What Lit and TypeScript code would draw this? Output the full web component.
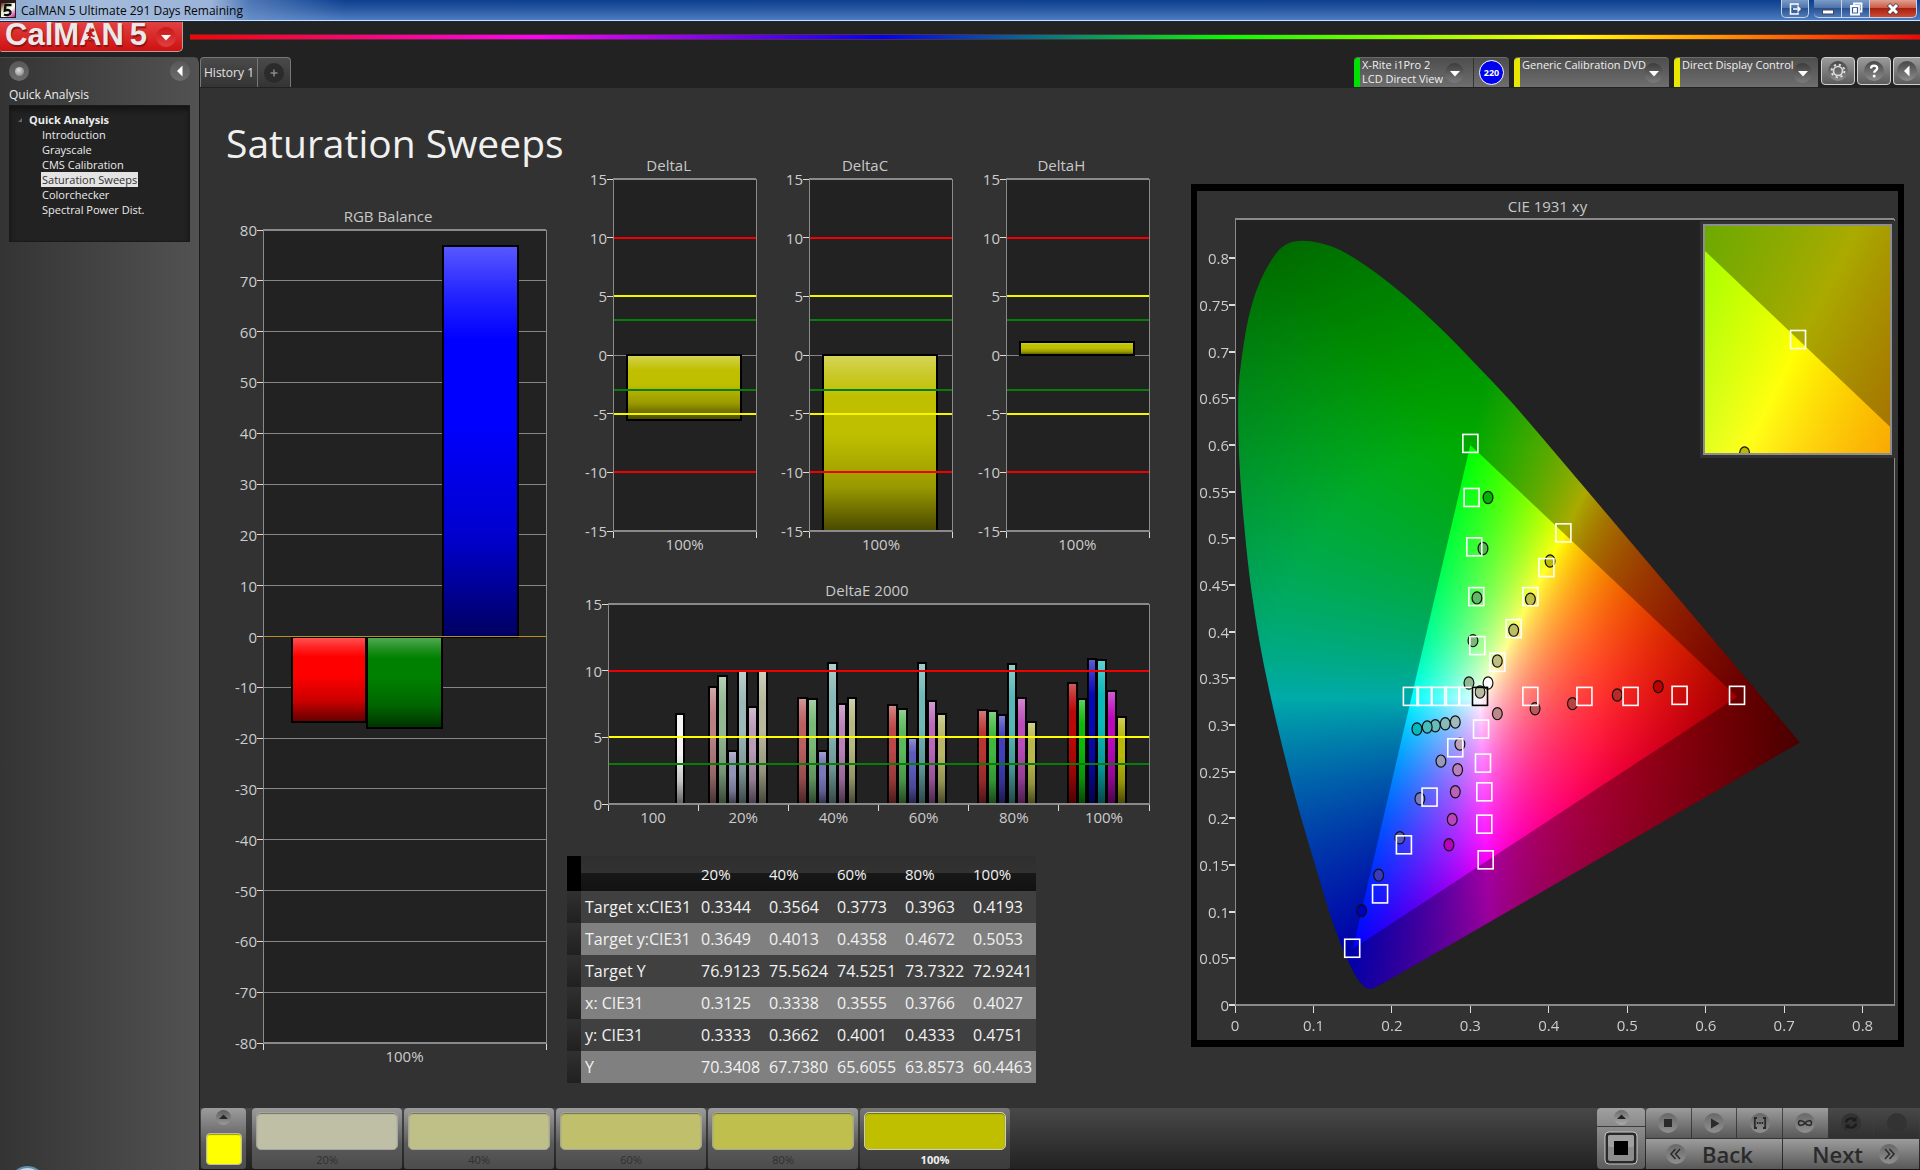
import { LitElement, html, svg, css, nothing } from "lit";
import { customElement, property } from "lit/decorators.js";
import { styleMap } from "lit/directives/style-map.js";

/* ------------------------------------------------------------------ data */

interface Bar { x: number; w: number; value: number; color: string; }
interface RefLine { at: number; color: string; }
interface ChartSpec {
  title: string;
  min: number;
  max: number;
  step: number;
  labels: string[];
  bars: Bar[];
  refs: RefLine[];
}

const RED = "#f00000";
const YELLOW = "#f5f500";
const GREEN = "#087d08";

const rgbBalance: ChartSpec = {
  title: "RGB Balance",
  min: -80, max: 80, step: 10,
  labels: ["100%"],
  bars: [
    { x: 10.1, w: 26.4, value: -16.8, color: "#ff0000" },
    { x: 36.9, w: 26.4, value: -18, color: "#008000" },
    { x: 63.6, w: 26.6, value: 76.9, color: "#0000ff" },
  ],
  refs: [{ at: 0, color: "#b8901c" }],
};

const deltaRefs: RefLine[] = [
  { at: 10, color: RED }, { at: 5, color: YELLOW }, { at: 3, color: GREEN },
  { at: -3, color: GREEN }, { at: -5, color: YELLOW }, { at: -10, color: RED },
];

const delta = (title: string, value: number): ChartSpec => ({
  title, min: -15, max: 15, step: 5, labels: ["100%"],
  bars: [{ x: 10, w: 79.5, value, color: "#bfbf00" }],
  refs: deltaRefs,
});

const sweepColors = [
  ["#b98080", "#92b892", "#9494b8", "#9cb8b8", "#b89cb8", "#b8b89c"],
  ["#bb6060", "#78b878", "#7878bb", "#88b8b8", "#bb80bb", "#b8b882"],
  ["#bb4848", "#5cb85c", "#5c5cbb", "#70b8b8", "#bb68bb", "#b8b868"],
  ["#bb3434", "#40b840", "#4040bb", "#54b8b8", "#bb4cbb", "#b8b84c"],
  ["#bb0808", "#0cb80c", "#0808bb", "#0cb8b8", "#bb08bb", "#b8b80c"],
];
const sweepValues = [
  [8.8, 9.6, 4, 9.95, 7.3, 9.95],
  [7.93, 7.85, 4, 10.6, 7.52, 7.93],
  [7.4, 7.15, 4.97, 10.6, 7.7, 6.77],
  [7.02, 6.95, 6.65, 10.48, 7.93, 6.12],
  [9.1, 7.85, 10.86, 10.78, 8.45, 6.55],
];

const deltaE: ChartSpec = {
  title: "DeltaE 2000",
  min: 0, max: 15, step: 5,
  labels: ["100", "20%", "40%", "60%", "80%", "100%"],
  bars: [
    { x: 12.5, w: 1.6, value: 6.77, color: "#f4f4f4" },
    ...sweepValues.flatMap((row, g) =>
      row.map((value, i) => ({
        x: 18.6 + g * 16.6 + i * 1.82, w: 1.6, value, color: sweepColors[g][i],
      }))),
  ],
  refs: [{ at: 10, color: RED }, { at: 5, color: "#ffff00" }, { at: 3, color: GREEN }],
};

const tableHead = ["20%", "40%", "60%", "80%", "100%"];
const tableRows: [string, string[]][] = [
  ["Target x:CIE31", ["0.3344", "0.3564", "0.3773", "0.3963", "0.4193"]],
  ["Target y:CIE31", ["0.3649", "0.4013", "0.4358", "0.4672", "0.5053"]],
  ["Target Y", ["76.9123", "75.5624", "74.5251", "73.7322", "72.9241"]],
  ["x: CIE31", ["0.3125", "0.3338", "0.3555", "0.3766", "0.4027"]],
  ["y: CIE31", ["0.3333", "0.3662", "0.4001", "0.4333", "0.4751"]],
  ["Y", ["70.3408", "67.7380", "65.6055", "63.8573", "60.4463"]],
];

type Point = [number, number];

const locus: Point[] = [
  [0.1711, 0.0168], [0.1627, 0.0204], [0.1548, 0.0293], [0.1428, 0.049], [0.1247, 0.0865],
  [0.1054, 0.1401], [0.0765, 0.2223], [0.0584, 0.2831], [0.0434, 0.3367], [0.0306, 0.39],
  [0.0181, 0.4583], [0.009, 0.537], [0.0046, 0.5905], [0.0036, 0.6477], [0.006, 0.6799],
  [0.0163, 0.7371], [0.0313, 0.7764], [0.0524, 0.8068], [0.067, 0.8165], [0.0843, 0.8193],
  [0.108, 0.8168], [0.1337, 0.8097], [0.1669, 0.7925], [0.2, 0.7715], [0.23, 0.75],
  [0.2663, 0.722], [0.3024, 0.6906], [0.3506, 0.6477], [0.3747, 0.6245], [0.447, 0.553],
  [0.6217, 0.3796], [0.72, 0.2813], [0.1807, 0.0186],
];
const gamut: Point[] = [[0.64, 0.33], [0.3, 0.6], [0.15, 0.06]];

const targets: Point[] = [
  [0.3, 0.6016], [0.3016, 0.5437], [0.305, 0.4908], [0.3076, 0.4375], [0.3089, 0.385],
  [0.4186, 0.5058], [0.3969, 0.4686], [0.3765, 0.4375], [0.3552, 0.4032], [0.3344, 0.3671],
  [0.2242, 0.3306], [0.2416, 0.3306], [0.2599, 0.3306], [0.2769, 0.3306], [0.2948, 0.3306],
  [0.3765, 0.3306], [0.4454, 0.3306], [0.5042, 0.3306], [0.5667, 0.3317], [0.6399, 0.3317],
  [0.3136, 0.2956], [0.3161, 0.2591], [0.3178, 0.2284], [0.3178, 0.1937], [0.3195, 0.1555],
  [0.2808, 0.2756], [0.248, 0.2227], [0.2153, 0.1716], [0.1849, 0.119], [0.1494, 0.0608],
];
const whitePoint: Point = [0.3123, 0.3306];

const readings: [number, number, string][] = [
  [0.3225, 0.5437, "#00b400"], [0.3161, 0.489, "#4cb84c"], [0.3084, 0.4361, "#62b862"],
  [0.3033, 0.3903, "#7ab87a"], [0.2982, 0.345, "#92b892"], [0.3225, 0.345, "#ffffff"],
  [0.3123, 0.3353, "#bbbba0"], [0.3344, 0.3685, "#bebe80"], [0.3552, 0.4014, "#bdbd64"],
  [0.3765, 0.4347, "#bdbd48"], [0.4016, 0.4756, "#baba00"], [0.3344, 0.3121, "#c08888"],
  [0.3825, 0.3174, "#bb5858"], [0.4301, 0.3228, "#bb4040"], [0.4872, 0.3321, "#bb2828"],
  [0.5395, 0.341, "#bb0000"], [0.2808, 0.3031, "#a0bbbb"], [0.268, 0.3013, "#88bbbb"],
  [0.2553, 0.2992, "#66bbbb"], [0.245, 0.2978, "#48bbbb"], [0.2319, 0.2956, "#00bbbb"],
  [0.2867, 0.2795, "#bb9fbb"], [0.2838, 0.252, "#bb7fbb"], [0.2808, 0.2284, "#bb60bb"],
  [0.2769, 0.1988, "#bb44bb"], [0.2727, 0.1716, "#bb00bb"], [0.2625, 0.2613, "#9898bb"],
  [0.2357, 0.2209, "#7a7abb"], [0.2101, 0.1791, "#5858bb"], [0.1831, 0.1391, "#3a3abb"],
  [0.1614, 0.1009, "#0000bb"],
];

/* ------------------------------------------------------------- bar chart */

@customElement("bar-chart")
export class BarChart extends LitElement {
  @property({ attribute: false }) spec!: ChartSpec;

  static styles = css`
    :host { display: flex; flex-direction: column; padding-left: var(--axis, 32px); }
    .title {
      margin: 0 0 0 calc(var(--axis, 32px) * -1);
      font-size: 15px; font-weight: 400; line-height: 25px; padding-bottom: 1px; text-align: center; color: #c8c8c8;
    }
    .plot { flex: 1; min-height: var(--plot, 300px); position: relative; }
    svg { position: absolute; inset: 0; width: 100%; height: 100%; overflow: visible; shape-rendering: crispEdges; }
    text { font-size: 15px; fill: #cccccc; text-anchor: end; }
    .labels { display: flex; height: 28px; line-height: 27px; font-size: 15px; color: #cccccc; }
    .labels span { flex: 1; text-align: center; }
  `;

  private y(v: number): number {
    const { min, max } = this.spec;
    return ((max - Math.max(min, Math.min(max, v))) / (max - min)) * 100;
  }

  render() {
    const s = this.spec;
    const ticks: number[] = [];
    for (let v = s.min; v <= s.max; v += s.step) ticks.push(v);
    return html`
      <h2 class="title">${s.title}</h2>
      <div class="plot">
        <svg role="img" aria-label=${s.title}>
          <defs>
            <linearGradient id="gloss" x1="0" y1="0" x2="0" y2="1">
              <stop offset="0" stop-color="#fff" stop-opacity=".35"></stop>
              <stop offset=".12" stop-color="#fff" stop-opacity=".15"></stop>
              <stop offset=".24" stop-color="#fff" stop-opacity="0"></stop>
              <stop offset=".45" stop-color="#000" stop-opacity="0"></stop>
              <stop offset=".75" stop-color="#000" stop-opacity=".2"></stop>
              <stop offset="1" stop-color="#000" stop-opacity=".62"></stop>
            </linearGradient>
          </defs>
          <rect width="100%" height="100%" fill="#222222"></rect>
          ${ticks.map((v) => svg`
            <line x1="0" x2="100%" y1="${this.y(v)}%" y2="${this.y(v)}%" stroke="#868686"></line>
            <line x1="-6" x2="0" y1="${this.y(v)}%" y2="${this.y(v)}%" stroke="#dcdcdc"></line>
            <text x="-6" y="${this.y(v)}%" dy="6">${v}</text>`)}
          ${s.bars.map((b) => {
            const top = this.y(Math.max(0, b.value));
            const h = this.y(Math.min(0, b.value)) - top;
            return svg`
              <rect x="${b.x}%" y="${top}%" width="${b.w}%" height="${h}%" fill=${b.color}></rect>
              <rect x="${b.x}%" y="${top}%" width="${b.w}%" height="${h}%" fill="url(#gloss)" stroke="#000" stroke-width="2"></rect>`;
          })}
          ${s.refs.map((r) => svg`
            <line x1="0" x2="100%" y1="${this.y(r.at)}%" y2="${this.y(r.at)}%" stroke=${r.color}
              stroke-width=${r.at === 0 ? 1 : 2}></line>`)}
          <rect width="100%" height="100%" fill="none" stroke="#8a8a8a"></rect>
          <line x1="0" x2="100%" y1="0" y2="0" stroke="#8a8a8a" stroke-width="2"></line>
          <line x1="0" x2="100%" y1="100%" y2="100%" stroke="#8a8a8a" stroke-width="2"></line>
          ${[...s.labels, ""].map((_, i) => {
            const x = `${(i / s.labels.length) * 100}%`;
            return svg`<svg x=${x} y="100%"><line x1="0" x2="0" y1="1" y2="7" stroke="#dcdcdc" stroke-width="1"></line></svg>`;
          })}
        </svg>
      </div>
      <div class="labels">${s.labels.map((l) => html`<span>${l}</span>`)}</div>
    `;
  }
}

/* ---------------------------------------------------- chromaticity field */

const shade = (x: number, y: number, dim: number): [number, number, number] => {
  const yy = Math.max(y, 0.001);
  const X = x / yy;
  const Z = (1 - x - y) / yy;
  const r = Math.max(0, 3.2406 * X - 1.5372 - 0.4986 * Z);
  const g = Math.max(0, -0.9689 * X + 1.8758 + 0.0415 * Z);
  const b = Math.max(0, 0.0557 * X - 0.204 + 1.057 * Z);
  const top = Math.max(r, g, b, 0.0001);
  const sum = r + g + b || 1;
  const d = Math.hypot(x - 0.3127, y - 0.329);
  const fade = 1
    - (Math.max(0, r - g) / sum) * 2.2 * Math.max(0, d - 0.15)
    - (Math.max(0, g - r) / sum) * 1.35 * Math.max(0, d - 0.27);
  const k = (255 * dim * fade) / top;
  return [r * k, g * k, b * k];
};

@customElement("gamut-field")
export class GamutField extends LitElement {
  @property({ attribute: false }) xRange: Point = [0, 0.84];
  @property({ attribute: false }) yRange: Point = [0, 0.842];

  private observer?: ResizeObserver;

  static styles = css`
    :host { display: block; position: relative; overflow: hidden; }
    canvas { position: absolute; inset: 0; width: 100%; height: 100%; }
    svg { position: absolute; inset: 0; width: 100%; height: 100%; }
    .mark { overflow: visible; width: auto; height: auto; }
  `;

  firstUpdated() {
    this.observer = new ResizeObserver(() => this.paint());
    this.observer.observe(this);
  }

  disconnectedCallback() {
    super.disconnectedCallback();
    this.observer?.disconnect();
  }

  private paint() {
    const canvas = this.renderRoot.querySelector("canvas")!;
    const w = this.clientWidth;
    const h = this.clientHeight;
    if (!w || !h) return;
    canvas.width = w;
    canvas.height = h;
    const ctx = canvas.getContext("2d")!;
    const [x0, x1] = this.xRange;
    const [y0, y1] = this.yRange;
    const px = (p: Point): Point => [((p[0] - x0) / (x1 - x0)) * w, ((y1 - p[1]) / (y1 - y0)) * h];

    const layer = (dim: number) => {
      const off = document.createElement("canvas");
      off.width = w;
      off.height = h;
      const octx = off.getContext("2d")!;
      const img = octx.createImageData(w, h);
      for (let j = 0; j < h; j++) {
        for (let i = 0; i < w; i++) {
          const c = shade(x0 + ((i + 0.5) / w) * (x1 - x0), y1 - ((j + 0.5) / h) * (y1 - y0), dim);
          const k = (j * w + i) * 4;
          img.data[k] = c[0];
          img.data[k + 1] = c[1];
          img.data[k + 2] = c[2];
          img.data[k + 3] = 255;
        }
      }
      octx.putImageData(img, 0, 0);
      return off;
    };
    const fill = (points: Point[], dim: number, smooth: boolean) => {
      ctx.save();
      ctx.beginPath();
      const pts = points.map(px);
      if (smooth) {
        const n = pts.length;
        const mid = (a: Point, b: Point): Point => [(a[0] + b[0]) / 2, (a[1] + b[1]) / 2];
        ctx.moveTo(...mid(pts[n - 1], pts[0]));
        pts.forEach((p, i) => {
          const next = mid(p, pts[(i + 1) % n]);
          if (points[i][0] === 0.72) {
            ctx.lineTo(...p);
            ctx.lineTo(...next);
          } else {
            ctx.quadraticCurveTo(p[0], p[1], next[0], next[1]);
          }
        });
      } else {
        pts.forEach((p) => ctx.lineTo(...p));
      }
      ctx.closePath();
      ctx.clip();
      ctx.drawImage(layer(dim), 0, 0);
      ctx.restore();
    };
    fill(locus, 0.667, true);
    fill(gamut, 1, false);
  }

  private at(x: number, y: number) {
    const [x0, x1] = this.xRange;
    const [y0, y1] = this.yRange;
    return { x: `${((x - x0) / (x1 - x0)) * 100}%`, y: `${((y1 - y) / (y1 - y0)) * 100}%` };
  }

  render() {
    const square = (p: Point, color: string) => {
      const c = this.at(...p);
      return svg`<svg class="mark" x=${c.x} y=${c.y}><rect x="-7.5" y="-9" width="15" height="18" fill="none" stroke=${color} stroke-width="1.6"></rect></svg>`;
    };
    return html`
      <canvas></canvas>
      <svg aria-hidden="true">
        ${readings.map(([x, y, color]) => {
          const c = this.at(x, y);
          return svg`<svg class="mark" x=${c.x} y=${c.y}><ellipse rx="4.9" ry="6.1" fill=${color} stroke="#111" stroke-width="1.2"></ellipse></svg>`;
        })}
        ${targets.map((t) => square(t, "#ffffff"))}
        ${square(whitePoint, "#000000")}
      </svg>
    `;
  }
}

@customElement("cie-chart")
export class CieChart extends LitElement {
  static styles = css`
    :host {
      display: flex; flex-direction: column; box-sizing: border-box;
      border: 6px solid #000; border-width: 7px 6px; background: #323232;
      padding: 0 4px 35px 38px;
    }
    .title {
      margin: 0 0 0 -34px; padding-top: 2px;
      font-size: 15px; font-weight: 400; line-height: 26px; text-align: center; color: #c8c8c8;
    }
    .plot { flex: 1; position: relative; background: #222222; }
    .field { position: absolute; inset: 0; }
    .axes { position: absolute; inset: 0; width: 100%; height: 100%; overflow: visible; shape-rendering: crispEdges; }
    .axes svg { overflow: visible; }
    text { font-size: 15px; fill: #cccccc; }
    .ytext { text-anchor: end; }
    .xtext { text-anchor: middle; }
    .inset {
      position: absolute; left: 70.5%; right: -1px; top: 2px; height: 30.2%;
      box-sizing: border-box; padding: 3px; background: #323232;
    }
    .inset gamut-field { height: 100%; box-sizing: border-box; border: 2px solid #8e8e8e; }
  `;

  render() {
    const ys = Array.from({ length: 17 }, (_, i) => i * 0.05);
    const xs = Array.from({ length: 9 }, (_, i) => i * 0.1);
    return html`
      <h2 class="title">CIE 1931 xy</h2>
      <div class="plot">
        <gamut-field class="field"></gamut-field>
        <svg class="axes" role="img" aria-label="CIE 1931 xy">
          <rect width="100%" height="100%" fill="none" stroke="#8a8a8a"></rect>
          <line x1="0" x2="100%" y1="0" y2="0" stroke="#8a8a8a" stroke-width="2"></line>
          <line x1="0" x2="100%" y1="100%" y2="100%" stroke="#8a8a8a" stroke-width="2"></line>
          ${ys.map((v) => svg`<svg y="${(1 - v / 0.842) * 100}%">
            <line x1="-6" x2="0" y1="0" y2="0" stroke="#dcdcdc" stroke-width="2"></line>
            <text class="ytext" x="-6" y="6">${Number(v.toFixed(2))}</text></svg>`)}
          ${xs.map((v) => svg`<svg x="${(v / 0.84) * 100}%" y="100%">
            <line x1="0" x2="0" y1="1" y2="8" stroke="#dcdcdc"></line>
            <text class="xtext" x="0" y="26">${Number(v.toFixed(1))}</text></svg>`)}
        </svg>
        <div class="inset">
          <gamut-field .xRange=${[0.389, 0.448] as Point} .yRange=${[0.4755, 0.536] as Point}></gamut-field>
        </div>
      </div>
    `;
  }
}

/* ----------------------------------------------------------------- shell */

const tri = (d: string) => html`<svg class="tri" viewBox="0 0 20 20" aria-hidden="true"><path d=${d} fill="currentColor"></path></svg>`;
const DOWN = "M5 8h10l-5 5.5z";
const LEFT = "M12.5 4.5v11L7 10z";
const UP = "M4 12h12l-6-6z";

@customElement("app-root")
export class AppRoot extends LitElement {
  static styles = css`
    :host {
      display: flex; flex-direction: column; min-height: 100vh; box-sizing: border-box;
      background: #222222; color: #ececec; overflow: hidden;
      font-family: "Open Sans", "Noto Sans", sans-serif;
    }
    button { font: inherit; color: inherit; border: 0; padding: 0; background: none; }
    svg { display: block; }

    /* window title bar */
    .titlebar {
      display: flex; align-items: flex-start; height: 20px; padding-right: 3px;
      border-bottom: 1px solid #d4e2f4; box-shadow: 0 1px 0 #10264c;
      background:
        linear-gradient(90deg, #8eaad0 0, #a4bbdb 5%, #9ab3d8 11%, rgba(120, 155, 205, .6) 13%, rgba(90, 130, 190, 0) 18%),
        linear-gradient(180deg, #0d3f92 0, #27579f 45%, #4d7cc2 100%);
    }
    .titlebar .mark { width: 16px; height: 18px; }
    .titlebar .name { flex: 1; margin: 0; padding-left: 5px; font-size: 12px; line-height: 21px; font-weight: 400; color: #050505; }
    .winbtns { display: flex; }
    .win {
      display: grid; place-items: center; width: 28px; height: 18px; box-sizing: border-box;
      border: 1px solid #c4d4ea; border-top: 0; color: #fff;
      background: linear-gradient(#7c9cc8 0, #4f74ac 45%, #2b5290 50%, #4f7ab8 100%);
    }
    .win + .win { border-left: 0; }
    .win.solo { border-radius: 0 0 5px 5px; margin-right: 5px; }
    .win.min { border-radius: 0 0 0 5px; }
    .win.close { width: 47px; border-radius: 0 0 5px 0; background: linear-gradient(#e0a090 0, #cc5c48 45%, #a82010 50%, #cc4c34 100%); }
    .win svg { width: 16px; height: 14px; }

    /* brand row */
    .brand { display: flex; align-items: flex-start; height: 35px; padding-top: 1px; }
    .logo {
      display: flex; align-items: center; width: 183px; height: 30px; box-sizing: border-box; padding-left: 5px;
      border: 1px solid #b9a0a0; border-top: 0; border-left: 0; border-radius: 0 0 5px 2px;
      background: linear-gradient(#e24141, #cf1010);
      color: #e9e9e9; text-shadow: 1px 2px 1px #8a1515;
    }
    .logo .word { position: relative; display: flex; gap: 6px; font: bold 31px/24px "Liberation Sans", Arial, sans-serif; padding-bottom: 3px; }
    .logo .runner { position: absolute; left: 79px; top: 5px; width: 13px; height: 16px; }
    .logo .pick { margin-left: auto; margin-right: 6px; }
    .spectrum {
      flex: 1; height: 4px; margin: 12px 0 0 7px; border-top: 1px solid #55302c; border-bottom: 1px solid #55302c;
      background: linear-gradient(90deg, #ff0000, #ff00ff, #0000ff, #00ff00, #ffff00, #ff0000);
    }

    .round {
      display: grid; place-items: center; flex: none; width: 20px; height: 20px; border-radius: 50%;
      background: linear-gradient(#2c2c2c, #6c6c6c); color: #fff;
    }
    .round svg, .tri { width: 20px; height: 20px; }
    .pick .round { background: linear-gradient(#c91818, #e04040); }

    /* body */
    .body { flex: 1; display: flex; }
    .side {
      position: relative; overflow: hidden;
      width: 200px; flex: none; box-sizing: border-box; padding: 3px 9px 0;
      background: linear-gradient(90deg, #343434, #525252); border-right: 1px solid #1c1c1c; border-top: 1px solid #4c4c4c;
      border-top-right-radius: 6px;
    }
    .side .knobs { display: flex; justify-content: space-between; }
    .side .round { background: linear-gradient(#585858, #6c6c6c); }
    .side .dot { width: 9px; height: 9px; border-radius: 50%; background: radial-gradient(circle at 40% 35%, #ddd, #777); }
    .side h2 { margin: 4px 0 0; font-size: 12px; line-height: 20px; font-weight: 400; }
    .tree {
      margin: 0; height: 137px; box-sizing: border-box; padding: 6px 0 0 19px; list-style: none;
      background: #222222; border: 1px solid #1a1a1a; box-shadow: inset 0 4px 5px #151515; font-size: 11px;
    }
    .tree ul { margin: 0; padding: 0 0 0 12px; list-style: none; }
    .tree li { line-height: 15px; }
    .tree .root { position: relative; font-weight: 700; line-height: 15px; display: block; }
    .tree .root::before {
      content: ""; position: absolute; left: -11px; top: 6px; border: 2px solid transparent;
      border-right-color: #666; border-bottom-color: #666;
    }
    .tree a { color: #ececec; text-decoration: none; display: block; width: max-content; line-height: 15px; padding: 0 1px; }
    .tree a.on { background: #e4e4e4; color: #303030; }
    .orb {
      position: absolute; left: 9px; bottom: -33px; width: 37px; height: 37px; box-sizing: border-box;
      border: 2px solid #5c8cac; border-radius: 50%; background: #c4d8e8;
    }

    .main { flex: 1; min-width: 0; display: flex; flex-direction: column; }
    .tabs { display: flex; height: 31px; background: #222222; }
    .tab {
      height: 30px; width: 58px; font-size: 12px; box-sizing: border-box; color: #e4e4e4; white-space: nowrap;
      border: 1px solid #777; border-bottom: 0; background: linear-gradient(#4a4a4a, #343434); border-radius: 4px 0 0 0;
    }
    .tab.add { width: 33px; border-left: 0; border-radius: 0 4px 0 0; padding: 0 6px; }
    .tab.add .round { background: #2b2b2b; color: #888; }
    .devices { margin-left: auto; display: flex; align-items: flex-start; }
    .device {
      display: flex; height: 30px; box-sizing: border-box; width: 155px; margin-right: 5px;
      background: linear-gradient(#4e4e4e, #6e6e6e); border-radius: 4px 4px 0 0; border-top: 1px solid #6a6a6a;
      font-size: 11px; line-height: 14px; text-align: left; color: #f0f0f0;
    }
    .device.last { width: 144px; margin-right: 3px; }
    .device::before { content: ""; width: 6px; flex: none; background: #e8e800; border-top-left-radius: 4px; }
    .device.live::before { background: #00e000; }
    .device .who { flex: 1; min-width: 0; padding: 0 0 0 2px; white-space: nowrap; }
    .device .round { width: 19px; margin: 5px 6px 0 0; background: linear-gradient(#3c3c3c, #7c7c7c); }
    .device.live .round { margin-right: 9px; }
    .device .meter { width: 36px; height: 29px; flex: none; box-sizing: border-box; display: grid; place-items: center; border-left: 1px solid #333; }
    .meter b {
      width: 23px; height: 23px; border: 1px solid #fff; border-radius: 50%; background: #0000f0;
      font: bold 9px/23px "Open Sans", sans-serif; text-align: center; color: #fff;
    }
    .tool {
      display: grid; place-items: center; width: 34px; height: 28px; box-sizing: border-box; margin-right: 2px;
      border: 1px solid #d0d0d0; border-radius: 4px; background: linear-gradient(#9a9a9a, #5c5c5c);
    }
    .tool.cut { margin-right: 0; width: 27px; border-right: 0; border-radius: 4px 0 0 4px; }
    .tool .round { background: linear-gradient(#484848, #8c8c8c); }

    .page {
      flex: 1; background: #323232; padding: 0 16px 0 26px;
      display: grid; grid-template-columns: 320fr 603fr 713fr; column-gap: 21px;
    }
    .col { min-width: 0; display: flex; flex-direction: column; }
    .a { padding: 27px 0 37px; }
    .b { padding: 65px 21px 25px 0; }
    .c { padding: 96px 0 61px; }
    h1 { margin: 0 0 33px; font-size: 39px; line-height: 56px; font-weight: 400; white-space: nowrap; color: #f0f0f0; }
    .a bar-chart { flex: 1; margin-left: 4px; --axis: 33px; }
    .deltas { display: grid; grid-template-columns: repeat(3, 1fr); gap: 21px; margin-left: 14px; --plot: 352px; }
    .errors { margin: 19px 0 24px 18px; --axis: 23px; --plot: 200px; }
    cie-chart { flex: 1; }

    table { align-self: flex-start; border-collapse: collapse; font-size: 16px; line-height: 20px; color: #f2f2f2; }
    th, td { height: 32px; padding: 0; font-weight: 400; text-align: left; box-sizing: border-box; white-space: nowrap; }
    td { width: 68px; }
    td:last-child { width: 63px; }
    tbody th { width: 120px; padding-left: 4px; }
    tbody tr { background: #404040; }
    tbody tr:nth-child(even) { background: #808080; }
    thead tr { background: linear-gradient(#2e2e2e 0, #323232 48%, #181818 49%, #121212 100%); }
    thead th { height: 35px; font-size: 15px; }
    .grip { width: 14px; padding: 0; background: linear-gradient(#303030, #202020); }
    thead .grip { background: #000; }

    /* footer */
    .foot {
      display: flex; height: 61px; background: linear-gradient(#484848, #222222); border-bottom: 1px solid #1a1416;
      font-size: 11px;
    }
    .panel { background: linear-gradient(#9c9c9c, #5a5a5a 60%, #4c4c4c); border-radius: 4px 4px 3px 3px; }
    .pickup { width: 45px; margin: 0 6px 0 1px; display: flex; flex-direction: column; align-items: center; justify-content: space-between; padding: 2px 0 4px; box-sizing: border-box; }
    .pickup .round { width: 15px; height: 15px; background: linear-gradient(#5c5c5c, #999); color: #262626; }
    .pickup .tri { width: 15px; height: 15px; }
    .chip { width: 36px; height: 32px; box-sizing: border-box; border: 1px solid #bbb; border-radius: 4px; background: #ffff00; box-shadow: inset 0 1px 1px rgba(0, 0, 0, .4); }
    .swatch { width: 150px; margin-right: 2px; display: flex; flex-direction: column; align-items: stretch; justify-content: flex-start; padding: 4px 4px 0; box-sizing: border-box; color: #303030; }
    .swatch i { height: 38px; box-sizing: border-box; border: 1px solid #a4a4a4; border-radius: 5px; box-shadow: inset 0 1px 1px rgba(0, 0, 0, .4); }
    .swatch span { line-height: 19px; text-align: center; }
    .swatch.on { background: linear-gradient(#787878, #444 60%, #3c3c3c); color: #f0f0f0; font-weight: 700; }
    .swatch.on i { border-color: #ccc; }

    .transport { margin-left: auto; display: flex; gap: 1px; padding-right: 1px; }
    .stopper { width: 48px; display: grid; grid-template-rows: 18px 1fr; gap: 1px; }
    .stopper button { display: grid; place-items: center; background: linear-gradient(#a0a0a0, #8a8a8a); border-radius: 4px 4px 0 0; }
    .stopper .round { width: 15px; height: 15px; background: linear-gradient(#6c6c6c, #aaa); color: #222; }
    .stopper .tri { width: 15px; height: 15px; }
    .stopper .big { background: linear-gradient(#8c8c8c, #5c5c5c); border-radius: 0 0 4px 4px; }
    .big svg { width: 34px; height: 34px; }
    .keys { display: grid; grid-template-columns: repeat(6, 1fr); grid-template-rows: 30px 30px; gap: 1px; width: 273px; }
    .key { display: grid; place-items: center; background: linear-gradient(#9c9c9c, #585858); color: #2a2a2a; }
    .key.off { background: linear-gradient(#484848, #303030); color: #1c1c1c; }
    .key .round { background: linear-gradient(#686868, #909090); color: inherit; }
    .key.off .round { background: #333; }
    .key.first { border-top-left-radius: 4px; }
    .key.end { border-top-right-radius: 4px; }
    .nav { grid-column: span 3; display: flex; align-items: center; justify-content: flex-start; gap: 16px; padding: 0 20px; font: 600 22px/28px "Open Sans", sans-serif; }
    .nav.next { justify-content: flex-end; }
  `;

  private round(content: unknown) {
    return html`<span class="round">${content}</span>`;
  }

  private titleBar() {
    return html`
      <div class="titlebar">
        <svg class="mark" viewBox="0 0 16 18" aria-hidden="true">
          <defs>
            <linearGradient id="mk" x1="0" y1="0" x2="1" y2="1">
              <stop offset="0" stop-color="#7a1010"></stop><stop offset=".35" stop-color="#d8f0c0"></stop>
              <stop offset=".6" stop-color="#fff"></stop><stop offset="1" stop-color="#c01880"></stop>
            </linearGradient>
          </defs>
          <rect width="16" height="18" fill="#2c1a1a"></rect>
          <rect x="1" y="3" width="14" height="14" fill="url(#mk)"></rect>
          <path d="M11.500 5H5.500L4.800 10.500C9 9 11 11 10.500 13C10 15.500 6 15.500 4 14.500" fill="none" stroke="#0a0a0a" stroke-width="2.400"></path>
        </svg>
        <p class="name">CalMAN 5 Ultimate 291 Days Remaining</p>
        <div class="winbtns">
          <button class="win solo" aria-label="Detach">
            <svg viewBox="0 0 16 14"><path d="M11 3.500V2H3.500v10H11v-1.500M6 7h7M10.500 4.500L13 7l-2.500 2.500" fill="none" stroke="#fff" stroke-width="1.500"></path></svg>
          </button>
          <button class="win min" aria-label="Minimize">
            <svg viewBox="0 0 16 14"><rect x="2.500" y="8" width="11" height="4" fill="#fff" stroke="#445"></rect></svg>
          </button>
          <button class="win" aria-label="Restore">
            <svg viewBox="0 0 16 14"><path d="M6 3V1.500h7.500v8H12M3 4h8v8.500H3zM6 7h2v2.500H6z" fill="none" stroke="#fff" stroke-width="1.800"></path></svg>
          </button>
          <button class="win close" aria-label="Close">
            <svg viewBox="0 0 16 14"><path d="M3.500 2.500l9 9M12.500 2.500l-9 9" stroke="#445" stroke-width="4.500"></path><path d="M4 3l8 8M12 3l-8 8" stroke="#fff" stroke-width="3"></path></svg>
          </button>
        </div>
      </div>`;
  }

  private sidebar() {
    const items = ["Introduction", "Grayscale", "CMS Calibration", "Saturation Sweeps", "Colorchecker", "Spectral Power Dist."];
    return html`
      <nav class="side">
        <div class="knobs">
          <button class="round" aria-label="Pin"><span class="dot"></span></button>
          <button class="round" aria-label="Collapse">${tri(LEFT)}</button>
        </div>
        <h2>Quick Analysis</h2>
        <ul class="tree">
          <li><span class="root">Quick Analysis</span>
            <ul>${items.map((t) => html`<li><a href="#" class=${t === "Saturation Sweeps" ? "on" : ""}>${t}</a></li>`)}</ul>
          </li>
        </ul>
        <span class="orb"></span>
      </nav>`;
  }

  private device(cls: string, who: unknown, meter?: string) {
    return html`
      <button class="device ${cls}" aria-haspopup="menu">
        <span class="who">${who}</span>${this.round(tri(DOWN))}
        ${meter ? html`<span class="meter"><b>${meter}</b></span>` : nothing}
      </button>`;
  }

  private topTabs() {
    return html`
      <div class="tabs">
        <button class="tab">History 1</button>
        <button class="tab add" aria-label="Add history">
          ${this.round(html`<svg viewBox="0 0 20 20"><path d="M10 6.500v7M6.500 10h7" stroke="currentColor" stroke-width="1.500"></path></svg>`)}
        </button>
        <div class="devices">
          ${this.device("live", html`X-Rite i1Pro 2<br>LCD Direct View`, "220")}
          ${this.device("", "Generic Calibration DVD")}
          ${this.device("last", "Direct Display Control")}
          <button class="tool" aria-label="Settings">
            ${this.round(html`<svg viewBox="0 0 20 20">
              <circle cx="10" cy="10" r="4.500" fill="none" stroke="#ddd" stroke-width="1.600"></circle>
              <circle cx="10" cy="10" r="6.400" fill="none" stroke="#ddd" stroke-width="2" stroke-dasharray="2.200 2.830"></circle></svg>`)}
          </button>
          <button class="tool" aria-label="Help">
            ${this.round(html`<svg viewBox="0 0 20 20">
              <path d="M7 7.600c0-4 6.200-3.800 6.200-.4 0 2.300-3 2.300-3 4.600" fill="none" stroke="#fff" stroke-width="2.300"></path>
              <circle cx="10.200" cy="15" r="1.500" fill="#fff"></circle></svg>`)}
          </button>
          <button class="tool cut" aria-label="Collapse panel">${this.round(tri(LEFT))}</button>
        </div>
      </div>`;
  }

  private footer() {
    const swatches: [string, string][] = [
      ["20%", "#bfbfa5"], ["40%", "#bfbf88"], ["60%", "#bfbf6c"], ["80%", "#bfbf4e"], ["100%", "#bfbf00"],
    ];
    const key = (cls: string, label: string, icon: unknown) => html`
      <button class="key ${cls}" aria-label=${label}>
        ${this.round(html`<svg viewBox="0 0 20 20" fill="none" stroke="currentColor">${icon}</svg>`)}
      </button>`;
    return html`
      <div class="foot">
        <button class="panel pickup" aria-label="Pattern colour">
          ${this.round(tri(UP))}<span class="chip"></span>
        </button>
        ${swatches.map(([t, c]) => html`
          <button class="panel swatch ${t === "100%" ? "on" : ""}">
            <i style=${styleMap({ backgroundColor: c })}></i><span>${t}</span>
          </button>`)}
        <div class="transport">
          <div class="stopper">
            <button aria-label="Expand">${this.round(tri(UP))}</button>
            <button class="big" aria-label="Pattern window">
              <svg viewBox="0 0 34 34">
                <rect x="1" y="1" width="32" height="32" rx="4" fill="#2a2a2a" stroke="#c8c8c8"></rect>
                <rect x="4" y="4" width="26" height="26" rx="2" fill="#8c8c8c"></rect>
                <rect x="4" y="4" width="26" height="12" rx="2" fill="#a0a0a0"></rect>
                <rect x="10" y="10" width="14" height="14" fill="#000"></rect>
              </svg>
            </button>
          </div>
          <div class="keys">
            ${key("first", "Stop", svg`<rect x="6" y="6" width="8" height="8" fill="currentColor" stroke="none"></rect>`)}
            ${key("", "Play", svg`<path d="M7 5.500v10l8.500-5z" fill="currentColor" stroke="none"></path>`)}
            ${key("", "Read series", svg`<path d="M7 5H4.800v10H7M13 5h2.200v10H13" stroke-width="1.800"></path><path d="M6.800 10h1.600M9.200 10h1.600M11.600 10h1.600" stroke-width="1.800"></path>`)}
            ${key("", "Continuous", svg`<path d="M10 10C8 7.300 3.500 6.500 3.500 10S8 12.700 10 10s6.500-3.500 6.500 0S12 12.700 10 10z" stroke-width="1.600"></path>`)}
            ${key("off", "Refresh", svg`<path d="M5 9.500C5.500 5.500 11 4 14 7M15 10.500C14.500 14.500 9 16 6 13" stroke-width="2.400"></path><path d="M15.500 3.500v5h-5zM4.500 16.500v-5h5z" fill="currentColor" stroke="none"></path>`)}
            ${key("off end", "Record", nothing)}
            <button class="key nav">
              ${this.round(html`<svg viewBox="0 0 20 20"><path d="M9.500 5L5 10l4.500 5M14 5l-4.500 5 4.500 5" fill="none" stroke="currentColor" stroke-width="1.500"></path></svg>`)}
              <span>Back</span>
            </button>
            <button class="key nav next">
              <span>Next</span>
              ${this.round(html`<svg viewBox="0 0 20 20"><path d="M10.500 5l4.500 5-4.500 5M6 5l4.500 5L6 15" fill="none" stroke="currentColor" stroke-width="1.500"></path></svg>`)}
            </button>
          </div>
        </div>
      </div>`;
  }

  render() {
    return html`
      ${this.titleBar()}
      <div class="brand">
        <button class="logo" aria-label="CalMAN 5 menu">
          <span class="word"><span>CalMAN</span><span>5</span>
            <svg class="runner" viewBox="0 0 12 15" aria-hidden="true">
              <circle cx="8" cy="2" r="1.700" fill="#c41818"></circle>
              <path d="M2 5l4-1 1 3 3 1M6.500 5L5 9l3 2-1 3.500M5 9l-1.500 3H.5" fill="none" stroke="#c41818" stroke-width="1.600"></path>
            </svg>
          </span>
          <span class="pick">${this.round(tri(DOWN))}</span>
        </button>
        <div class="spectrum"></div>
      </div>
      <div class="body">
        ${this.sidebar()}
        <main class="main">
          ${this.topTabs()}
          <div class="page">
            <section class="col a">
              <h1>Saturation Sweeps</h1>
              <bar-chart .spec=${rgbBalance}></bar-chart>
            </section>
            <section class="col b">
              <div class="deltas">
                <bar-chart .spec=${delta("DeltaL", -5.5)}></bar-chart>
                <bar-chart .spec=${delta("DeltaC", -15)}></bar-chart>
                <bar-chart .spec=${delta("DeltaH", 1.1)}></bar-chart>
              </div>
              <bar-chart class="errors" .spec=${deltaE}></bar-chart>
              <table>
                <thead><tr><th class="grip"></th><th></th>${tableHead.map((t) => html`<th scope="col">${t}</th>`)}</tr></thead>
                <tbody>
                  ${tableRows.map(([label, cells]) => html`
                    <tr><td class="grip"></td><th scope="row">${label}</th>${cells.map((c) => html`<td>${c}</td>`)}</tr>`)}
                </tbody>
              </table>
            </section>
            <section class="col c"><cie-chart></cie-chart></section>
          </div>
          ${this.footer()}
        </main>
      </div>
    `;
  }
}
